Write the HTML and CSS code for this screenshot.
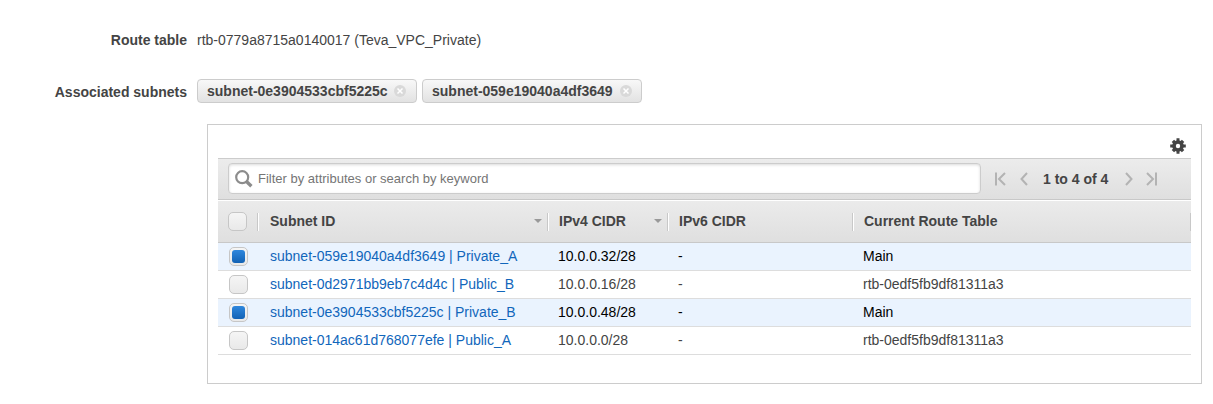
FILE: index.html
```html
<!DOCTYPE html>
<html lang="en">
<head>
<meta charset="utf-8">
<title>Edit subnet associations</title>
<link rel="stylesheet" href="styles.css">
</head>
<body>
<main class="form">
  <div class="field">
    <div class="label">Route table</div>
    <div class="value">rtb-0779a8715a0140017 (Teva_VPC_Private)</div>
  </div>
  <div class="field field-subnets">
    <div class="label">Associated subnets</div>
    <div class="chips">
      <span class="chip"><span class="chip-text">subnet-0e3904533cbf5225c</span><svg class="remove" viewBox="0 0 12 12"><circle cx="6" cy="6" r="6"/><path d="M3.5 3.5l5 5m0-5l-5 5"/></svg></span>
      <span class="chip"><span class="chip-text">subnet-059e19040a4df3649</span><svg class="remove" viewBox="0 0 12 12"><circle cx="6" cy="6" r="6"/><path d="M3.5 3.5l5 5m0-5l-5 5"/></svg></span>
    </div>
  </div>
  <section class="panel">
    <div class="settings">
      <svg class="gear" viewBox="0 0 16 16"><g fill="#444"><circle cx="8" cy="8" r="5.800"/><path d="M6.500 .2h3v15.600h-3zM.2 6.500h15.600v3H.2z"/><path d="M6.300 .8h3.400v14.400H6.300zM.8 6.300h14.400v3.400H.8z" transform="rotate(45 8 8)"/></g><circle cx="8" cy="8" r="2.200" fill="#fff"/></svg>
    </div>
    <div class="toolbar">
      <div class="search">
        <svg class="glass" viewBox="0 0 18 18" fill="none" stroke="#8c8c8c"><circle cx="7.200" cy="7.200" r="6" stroke-width="2.200"/><path d="M11.500 11.500l4.900 4.700" stroke-width="3.400"/></svg>
        <span>Filter by attributes or search by keyword</span>
      </div>
      <div class="pager">
        <svg class="nav first" viewBox="0 0 11 14"><path d="M1 .5v13M10 1L4 7l6 6"/></svg>
        <svg class="nav prev" viewBox="0 0 8 14"><path d="M7 1L1.500 7 7 13"/></svg>
        <span class="range">1 to 4 of 4</span>
        <svg class="nav next" viewBox="0 0 8 14"><path d="M1 1l5.500 6L1 13"/></svg>
        <svg class="nav last" viewBox="0 0 11 14"><path d="M10 .5v13M1 1l6 6-6 6"/></svg>
      </div>
    </div>
    <div class="row head">
      <div class="cell pick"><span class="box"></span></div>
      <div class="cell id">Subnet ID<svg class="sort" viewBox="0 0 8 4"><path d="M0 0h8L4 4z"/></svg></div>
      <div class="cell v4">IPv4 CIDR<svg class="sort" viewBox="0 0 8 4"><path d="M0 0h8L4 4z"/></svg></div>
      <div class="cell v6">IPv6 CIDR</div>
      <div class="cell route">Current Route Table</div>
    </div>
    <div class="row selected">
      <div class="cell pick"><span class="box checked"></span></div>
      <div class="cell id">subnet-059e19040a4df3649 | Private_A</div>
      <div class="cell v4">10.0.0.32/28</div>
      <div class="cell v6">-</div>
      <div class="cell route">Main</div>
    </div>
    <div class="row">
      <div class="cell pick"><span class="box"></span></div>
      <div class="cell id">subnet-0d2971bb9eb7c4d4c | Public_B</div>
      <div class="cell v4">10.0.0.16/28</div>
      <div class="cell v6">-</div>
      <div class="cell route">rtb-0edf5fb9df81311a3</div>
    </div>
    <div class="row selected">
      <div class="cell pick"><span class="box checked"></span></div>
      <div class="cell id">subnet-0e3904533cbf5225c | Private_B</div>
      <div class="cell v4">10.0.0.48/28</div>
      <div class="cell v6">-</div>
      <div class="cell route">Main</div>
    </div>
    <div class="row">
      <div class="cell pick"><span class="box"></span></div>
      <div class="cell id">subnet-014ac61d768077efe | Public_A</div>
      <div class="cell v4">10.0.0.0/28</div>
      <div class="cell v6">-</div>
      <div class="cell route">rtb-0edf5fb9df81311a3</div>
    </div>
  </section>
</main>
</body>
</html>
```

FILE: styles.css
```css
* { box-sizing: border-box; }
body {
  margin: 0;
  background: #fff;
  color: #444;
  font: 14px/20px "Liberation Sans", Arial, sans-serif;
}
svg { display: block; flex: none; }
.form { width: 1213px; height: 404px; padding-top: 30px; }
.field { display: flex; align-items: center; height: 20px; }
.field-subnets { height: 24px; margin-top: 29px; }
.label { width: 187px; margin-right: 10px; text-align: right; font-weight: bold; }
.field-subnets .label { padding-top: 2px; }
.chips { display: flex; gap: 5px; }
.chip {
  display: flex;
  align-items: center;
  justify-content: space-between;
  width: 220px;
  height: 24px;
  padding: 0 10px 0 9px;
  border: 1px solid #ccc;
  border-radius: 4px;
  background: linear-gradient(#f8f8f8, #e2e2e2);
  font-weight: bold;
}
.chip:last-child { padding-right: 9px; }
.remove { width: 12px; height: 12px; fill: #d9d9d9; stroke: none; }
.remove path { stroke: #fff; stroke-width: 1.5; }
.panel {
  width: 995px;
  height: 260px;
  margin: 21px 0 0 207px;
  padding: 0 10px;
  border: 1px solid #ccc;
}
.settings {
  display: flex;
  justify-content: flex-end;
  height: 33px;
  padding: 13px 5.5px 0 0;
}
.gear { width: 16px; height: 16px; }
.toolbar {
  display: flex;
  height: 42px;
  padding: 4px 10px 0;
  border-top: 1px solid #ccc;
  border-bottom: 1px solid #c8c8c8;
  background: linear-gradient(#ececec, #dfdfdf);
}
.search {
  display: flex;
  align-items: center;
  width: 753px;
  height: 31px;
  padding-left: 6px;
  border: 1px solid #ccc;
  border-radius: 4px;
  background: #fff;
  box-shadow: inset 0 1px 3px rgba(0, 0, 0, .15);
  color: #757575;
  font-size: 13px;
}
.glass { width: 18px; height: 18px; margin: 1px 5px 0 0; }
.pager { display: flex; align-items: center; height: 31px; padding-left: 14px; }
.nav { height: 14px; fill: none; stroke: #b3b3b3; stroke-width: 2; }
.first, .last { width: 11px; }
.prev, .next { width: 8px; }
.prev { margin-left: 14px; }
.range { width: 66px; margin: 0 16px 0 15px; font-weight: bold; white-space: nowrap; }
.last { margin-left: 13px; }
.row { display: flex; height: 28px; border-bottom: 1px solid #ddd; }
.cell { display: flex; align-items: center; padding-bottom: 2px; white-space: nowrap; }
.pick { width: 40px; padding: 0 0 0 11px; }
.id { width: 290px; padding-left: 12px; color: #1166bb; }
.v4 { width: 120px; padding-left: 10px; }
.v6 { width: 185px; padding-left: 10px; }
.route { width: 338px; padding-left: 10px; }
.selected { background: #eaf3fe; color: #000; }
.head {
  height: 43px;
  align-items: center;
  border-top: 1px solid #fff;
  border-bottom-color: #c8c8c8;
  background: linear-gradient(#ebebeb, #dfdfdf);
  font-weight: bold;
}
.head .cell { height: 18px; border-right: 1px solid #fff; box-shadow: inset -1px 0 #c8c8c8; }
.head .pick { width: 41px; padding-left: 10px; }
.head .id { padding-left: 11px; color: #444; }
.head .route { width: 337px; flex: none; border-right: 0; }
.sort { width: 8px; height: 4px; margin: 0 6.5px 0 auto; fill: #999; }
.box {
  width: 19px;
  height: 19px;
  flex: none;
  padding: 2px;
  border: 1px solid #c6c6c6;
  border-radius: 5px;
  background: linear-gradient(#f5f5f5, #e9e9e9);
}
.checked::before {
  content: "";
  display: block;
  width: 13px;
  height: 13px;
  border-radius: 3px;
  background: linear-gradient(#2f87dd, #1262b5);
}
```
